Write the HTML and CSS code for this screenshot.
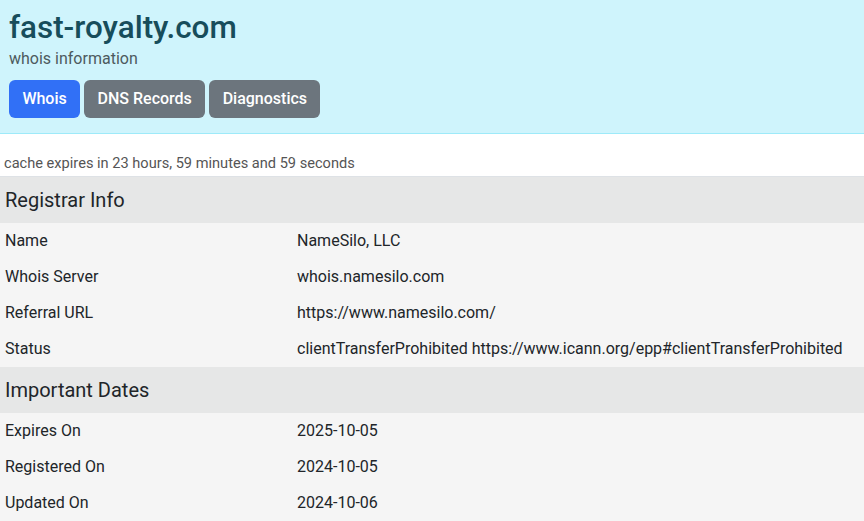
FILE: index.html
```html
<!DOCTYPE html>
<html lang="en">
<head>
<meta charset="utf-8">
<title>fast-royalty.com whois</title>
<link rel="stylesheet" href="styles.css">
</head>
<body>
<header class="hero">
  <h1 class="hero-title">fast-royalty.com</h1>
  <div class="hero-sub">whois information</div>
  <nav class="tabs">
    <a class="btn btn-primary" href="#">Whois</a>
    <a class="btn btn-secondary" href="#">DNS Records</a>
    <a class="btn btn-secondary" href="#">Diagnostics</a>
  </nav>
</header>
<main>
  <div class="cache">cache expires in 23 hours, 59 minutes and 59 seconds</div>
  <table class="info">
    <tbody>
      <tr class="section"><th colspan="2">Registrar Info</th></tr>
      <tr><td class="label">Name</td><td>NameSilo, LLC</td></tr>
      <tr><td class="label">Whois Server</td><td>whois.namesilo.com</td></tr>
      <tr><td class="label">Referral URL</td><td>https://www.namesilo.com/</td></tr>
      <tr><td class="label">Status</td><td>clientTransferProhibited https://www.icann.org/epp#clientTransferProhibited</td></tr>
      <tr class="section"><th colspan="2">Important Dates</th></tr>
      <tr><td class="label">Expires On</td><td>2025-10-05</td></tr>
      <tr><td class="label">Registered On</td><td>2024-10-05</td></tr>
      <tr><td class="label">Updated On</td><td>2024-10-06</td></tr>
    </tbody>
  </table>
</main>
</body>
</html>
```
FILE: styles.css
```css
* { box-sizing: border-box; }
html, body { margin: 0; padding: 0; }
body {
  font-family: Roboto, "Liberation Sans", sans-serif;
  font-size: 16px;
  line-height: 1.5;
  color: #212529;
  background: #fff;
}
.hero {
  background: #cff4fc;
  border-bottom: 1px solid #9eeaf9;
  padding: 8px 8px 15px 9px;
}
.hero-title {
  margin: 0;
  font-size: 31.4px;
  font-weight: 500;
  line-height: 40px;
  color: #174d5b;
}
.hero-sub {
  color: #4d5a5e;
  font-size: 16px;
  line-height: 24px;
  margin-top: -1px;
}
.tabs {
  display: flex;
  gap: 4px;
  margin-top: 9px;
}
.btn {
  display: inline-block;
  padding: 6px 12.4px;
  font-size: 16px;
  line-height: 24px;
  font-weight: 500;
  color: #fff;
  text-decoration: none;
  border-radius: 6px;
  border: 1px solid transparent;
}
.btn-primary { background: #3170f6; }
.btn-secondary { background: #6c757d; }
.cache {
  font-size: 14.6px;
  line-height: 21px;
  color: #555;
  padding: 19px 4px 2px;
}
.info {
  width: 100%;
  border-collapse: collapse;
  border-top: 1px solid #dee2e6;
  border-bottom: 1px solid #dee2e6;
}
.info td, .info th {
  padding: 6px 5px;
  text-align: left;
  vertical-align: top;
  font-weight: 400;
  white-space: nowrap;
}
.info tr { background: #f5f5f5; }
.info td { height: 36px; }
.info td.label { width: 292px; }
.info tr.section { background: #e6e7e7; }
.info tr.section th {
  font-size: 20px;
  line-height: 30px;
  padding: 8px 5px;
  height: 46px;
}
```
